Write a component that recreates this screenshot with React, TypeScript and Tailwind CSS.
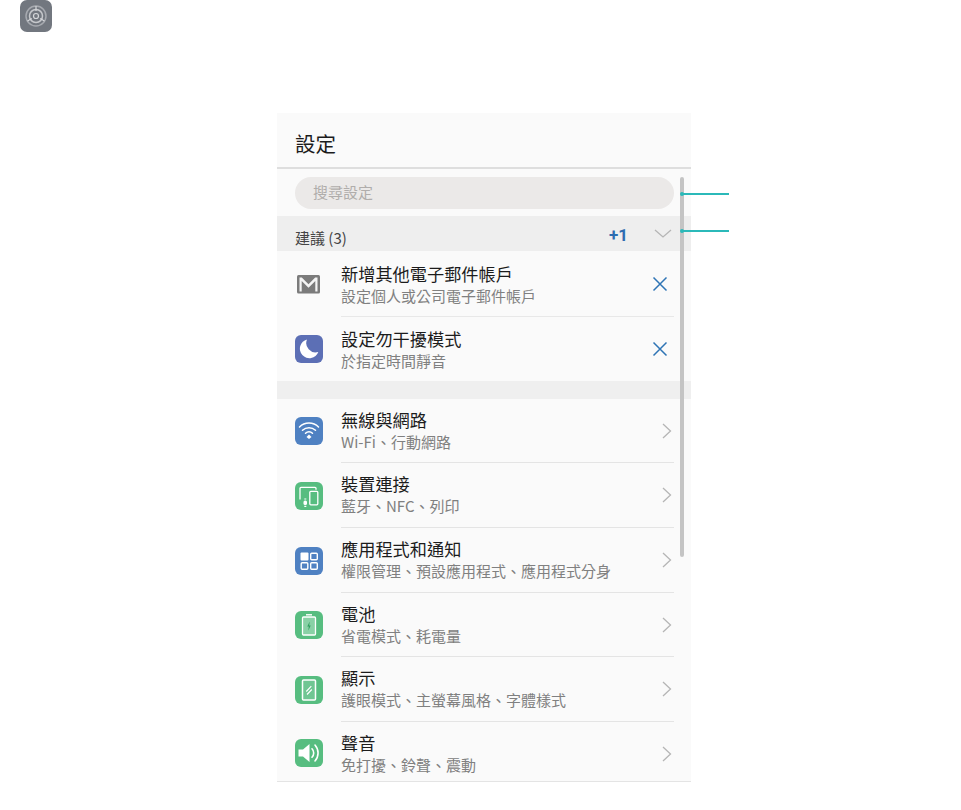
import type { ReactNode } from "react";

const font = { fontFamily: '"Noto Sans CJK TC", "Noto Sans", sans-serif' };

function Tile({ color, children }: { color: string; children: ReactNode }) {
  return (
    <svg width="28" height="28" viewBox="0 0 28 28" fill="none" className="shrink-0">
      <rect width="28" height="28" rx="6" fill={color} />
      {children}
    </svg>
  );
}

const MailIcon = (
  <svg width="28" height="28" viewBox="0 0 28 28" className="shrink-0">
    <rect x="2" y="5" width="23" height="18.500" rx="1.500" fill="#7b7b7b" />
    <path d="M4.500 7.500h2.300l6.700 6.800 6.700-6.800h2.300v14h-2.200V11l-6.800 6.800L6.700 11v10.500H4.500z" fill="#f4f4f4" />
  </svg>
);

const MoonIcon = (
  <Tile color="#5c6fb5">
    <path d="M12 4.500A9.500 9.500 0 1 0 23.300 17 A9.300 9.300 0 0 1 12 4.500z" fill="#fff" />
  </Tile>
);

const WifiIcon = (
  <Tile color="#4f81c2">
    <g stroke="#fff" strokeWidth="1.500" strokeLinecap="round">
      <path d="M4.500 10a13.500 13.500 0 0 1 19 0" />
      <path d="M7.500 13.200a9.500 9.500 0 0 1 13 0" />
      <path d="M10.500 16.200a5.200 5.200 0 0 1 7 0" />
    </g>
    <path d="M14 17.500l2.500 2.600-2.500 2-2.500-2z" fill="#fff" />
  </Tile>
);

const DeviceIcon = (
  <Tile color="#57bd80">
    <path d="M5 17.500V6.300a1 1 0 0 1 1-1h14a1 1 0 0 1 1 1v1.500" stroke="#fff" strokeWidth="1.300" />
    <rect x="14.800" y="9.300" width="8" height="13.500" rx="1" stroke="#fff" strokeWidth="1.300" />
    <rect x="8.500" y="18.500" width="3.500" height="4.500" rx="1.500" fill="#fff" />
    <path d="M9.300 17h2M9.300 24.300h2" stroke="#fff" strokeWidth="1.200" />
  </Tile>
);

const AppsIcon = (
  <Tile color="#4f81c2">
    <rect x="5.500" y="5.500" width="8" height="8" rx="1" fill="#fff" />
    <g stroke="#fff" strokeWidth="1.400">
      <rect x="15.700" y="6.200" width="6.600" height="6.600" rx="1" />
      <rect x="6.200" y="15.700" width="6.600" height="6.600" rx="1" />
      <rect x="15.700" y="15.700" width="6.600" height="6.600" rx="1" />
    </g>
  </Tile>
);

const BatteryIcon = (
  <Tile color="#57bd80">
    <rect x="7.500" y="6" width="13" height="18" rx="1" fill="#ffffff" fillOpacity="0.3" stroke="#fff" strokeWidth="1.300" />
    <path d="M11 3.800h6" stroke="#fff" strokeWidth="1.400" />
    <path d="M14.700 10.500l-2.400 5h1.500l-.5 4.300 2.400-5.200h-1.500z" fill="#2f9e5f" />
  </Tile>
);

const DisplayIcon = (
  <Tile color="#57bd80">
    <rect x="7.500" y="4" width="13" height="20" rx="1" fill="#ffffff" fillOpacity="0.15" stroke="#fff" strokeWidth="1.500" />
    <path d="M11.300 15.500l5-5.300M12 18.500l4.800-5" stroke="#fff" strokeWidth="1.100" />
  </Tile>
);

const SoundIcon = (
  <Tile color="#57bd80">
    <path d="M3.500 10.500h4.500l6.500-5.500v18l-6.500-5.500H3.500z" fill="#fff" />
    <path d="M17 9.800a6 6 0 0 1 0 8.400" stroke="#fff" strokeWidth="1.600" strokeLinecap="round" />
    <path d="M20 6a12 12 0 0 1 0 16" stroke="#fff" strokeWidth="1.600" strokeLinecap="round" />
  </Tile>
);

const CloseIcon = (
  <svg width="16" height="16" viewBox="0 0 16 16" className="shrink-0">
    <path d="M1.500 1.500l13 13M14.500 1.500l-13 13" stroke="#2e74b5" strokeWidth="1.500" />
  </svg>
);

const ChevronIcon = (
  <svg width="10" height="16" viewBox="0 0 10 16" className="shrink-0 mt-[2px]">
    <path d="M1 1l7.500 7L1 15" stroke="#b5b5b5" strokeWidth="1.300" fill="none" />
  </svg>
);

const suggestions = [
  { icon: MailIcon, title: "新增其他電子郵件帳戶", sub: "設定個人或公司電子郵件帳戶", h: "h-[66px]", line: true },
  { icon: MoonIcon, title: "設定勿干擾模式", sub: "於指定時間靜音", h: "h-[64px]", line: false },
];

const rows = [
  { icon: WifiIcon, title: "無線與網路", sub: "Wi-Fi、行動網路", h: "h-[64px]" },
  { icon: DeviceIcon, title: "裝置連接", sub: "藍牙、NFC、列印", h: "h-[65px]" },
  { icon: AppsIcon, title: "應用程式和通知", sub: "權限管理、預設應用程式、應用程式分身", h: "h-[65px]" },
  { icon: BatteryIcon, title: "電池", sub: "省電模式、耗電量", h: "h-[64px]" },
  { icon: DisplayIcon, title: "顯示", sub: "護眼模式、主螢幕風格、字體樣式", h: "h-[65px]" },
];

const lastRow = { icon: SoundIcon, title: "聲音", sub: "免打擾、鈴聲、震動" };

function RowText({ title, sub }: { title: string; sub: string }) {
  return (
    <div className="flex-1 flex flex-col">
      <div className="text-[17.200px] leading-[24px] text-[#1c1c1c]">{title}</div>
      <div className="text-[15px] leading-[20px] text-[#808080]">{sub}</div>
    </div>
  );
}

export default function App() {
  return (
    <div className="min-h-[810px] bg-white" style={font}>
      <div className="pl-[20px]">
        <svg width="32" height="32" viewBox="0 0 32 32" className="block">
          <rect width="32" height="32" rx="7" fill="#72777f" />
          <circle cx="16" cy="16" r="10" stroke="#a6a9af" strokeWidth="1.500" fill="none" />
          <circle cx="16" cy="16" r="6.500" stroke="#c6c8cc" strokeWidth="1.500" fill="none" />
          <circle cx="16" cy="16" r="2.500" stroke="#d5d7da" strokeWidth="1.200" fill="none" />
          <path d="M16 6v5M7.500 21l4.300-2.500M24.500 21l-4.300-2.500" stroke="#d5d7da" strokeWidth="1.200" />
        </svg>
      </div>

      <div className="relative ml-[277px] mt-[81px] w-[414px] bg-[#fafafa]">
        <div className="h-[54px] pl-[18px] pt-[6px] flex items-center text-[20.500px] text-[#1c1c1c]">設定</div>
        <div className="h-[2px] bg-[#dedede]" />

        <div className="h-[47px] pt-[8px] pl-[18px] pr-[17px]">
          <div className="h-[32px] rounded-full bg-[#ebe9e8] pl-[18px] pb-[1px] flex items-center text-[15px] text-[#b0adab]">
            搜尋設定
          </div>
        </div>

        <div className="h-[35px] bg-[#eeeeee] pl-[18px] flex items-end pb-[2px]">
          <span className="flex-1 text-[15px] text-[#444444]">建議 (3)</span>
          <span className="mr-[26px] mb-[2px] text-[17px] leading-[24px] font-bold text-[#2e6cb0]" style={{ fontFamily: '"Roboto", sans-serif' }}>+1</span>
          <svg width="18" height="10" viewBox="0 0 18 10" className="mr-[19px] mb-[10px]">
            <path d="M1 1l8 7 8-7" stroke="#b5b5b5" strokeWidth="1.300" fill="none" />
          </svg>
        </div>

        {suggestions.map((s) => (
          <div key={s.title} className={`${s.h} flex items-center pl-[18px]`}>
            {s.icon}
            <div className={`ml-[18px] mr-[17px] flex-1 h-full flex items-center pr-[6px] ${s.line ? "border-b border-[#e8e8e8]" : ""}`}>
              <RowText title={s.title} sub={s.sub} />
              {CloseIcon}
            </div>
          </div>
        ))}

        <div className="h-[18px] bg-[#efefef]" />

        {rows.map((r) => (
          <div key={r.title} className={`${r.h} flex items-center pl-[18px]`}>
            {r.icon}
            <div className="ml-[18px] mr-[17px] flex-1 h-full flex items-center pr-[2px] pb-[2px] border-b border-[#e4e4e4]">
              <RowText title={r.title} sub={r.sub} />
              {ChevronIcon}
            </div>
          </div>
        ))}

        <div className="h-[60px] overflow-hidden border-b border-[#e4e4e4]">
          <div className="h-[62px] flex items-center pl-[18px]">
            {lastRow.icon}
            <div className="ml-[18px] mr-[17px] flex-1 h-full flex items-center pr-[2px]">
              <RowText title={lastRow.title} sub={lastRow.sub} />
              {ChevronIcon}
            </div>
          </div>
        </div>

        {/* scrollbar */}
        <div className="absolute left-[403px] top-[64px] w-[4px] h-[380px] rounded-full bg-[#c4c4c4]" />

        {/* callout lines */}
        <div className="absolute left-[404px] top-[80px] w-[48px] h-[2px] bg-[#2bb9b9]" />
        <div className="absolute left-[403px] top-[79px] w-[4px] h-[4px] rounded-full bg-[#2bb9b9]" />
        <div className="absolute left-[404px] top-[117px] w-[48px] h-[2px] bg-[#2bb9b9]" />
        <div className="absolute left-[403px] top-[116px] w-[4px] h-[4px] rounded-full bg-[#2bb9b9]" />
      </div>
    </div>
  );
}
